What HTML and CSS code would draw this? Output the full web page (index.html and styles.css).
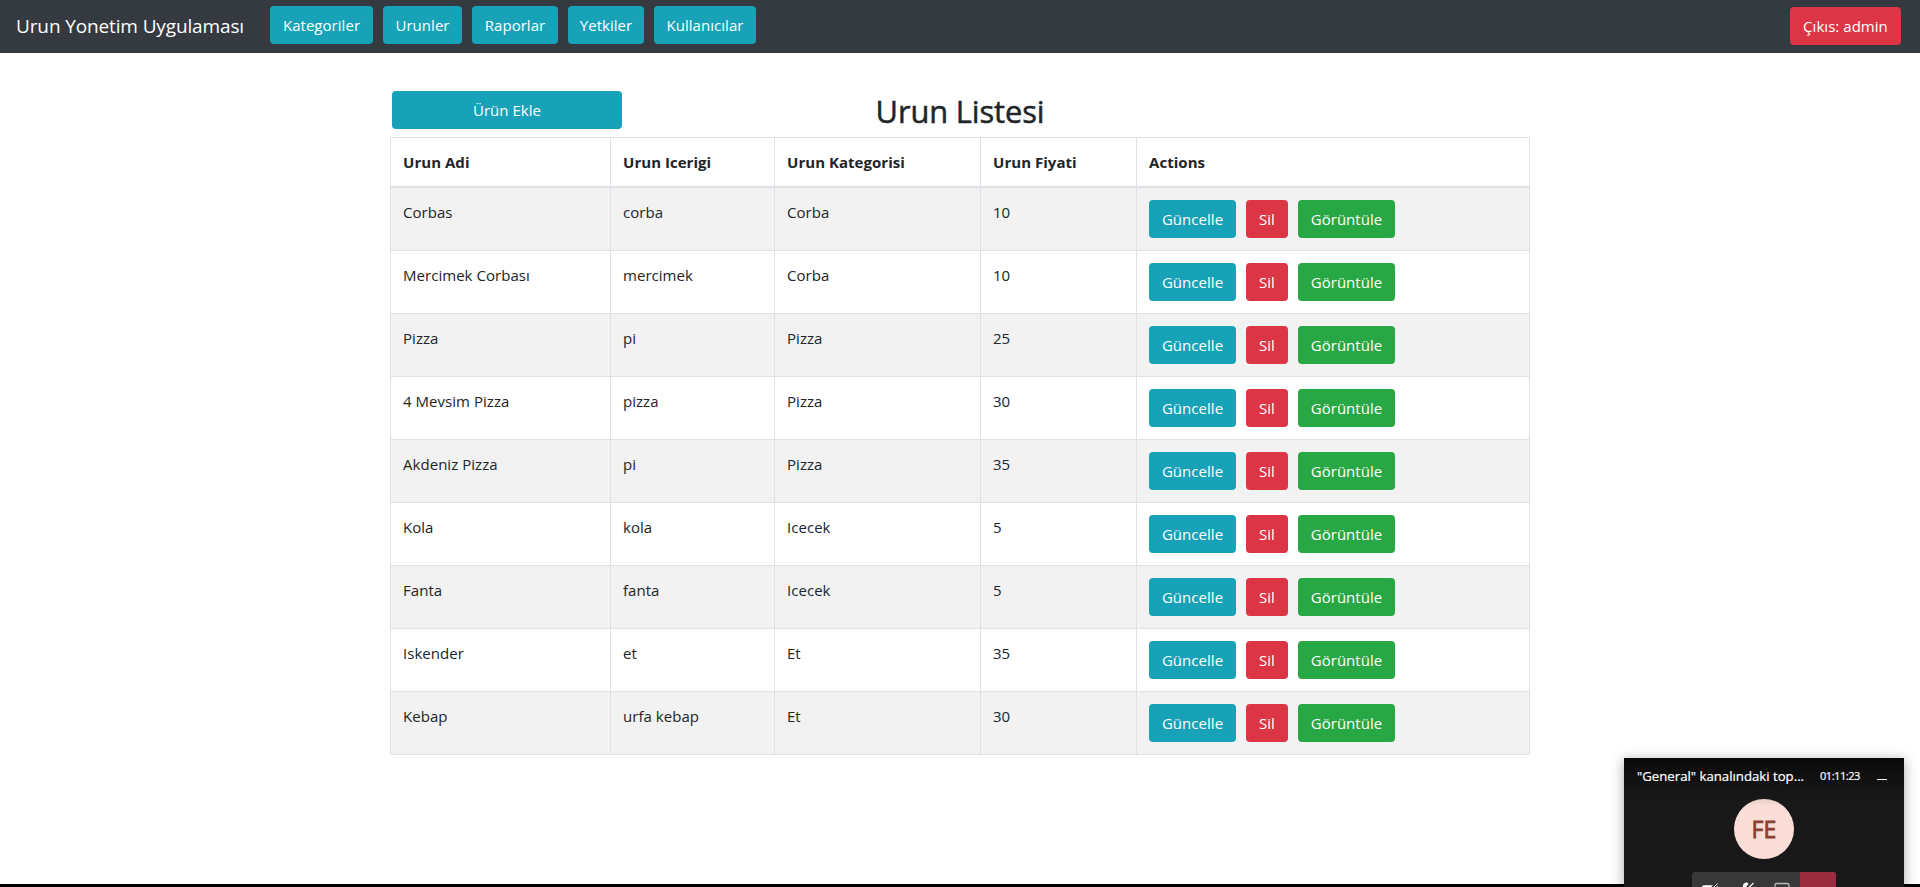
FILE: index.html
```html
<!DOCTYPE html>
<html lang="tr">
<head>
<meta charset="utf-8">
<title>Urun Listesi</title>
<link rel="stylesheet" href="styles.css">
</head>
<body>
<nav class="navbar">
  <a class="brand">Urun Yonetim Uygulaması</a>
  <div class="menu">
    <a class="btn info w-kategori">Kategoriler</a>
    <a class="btn info w-urun">Urunler</a>
    <a class="btn info w-rapor">Raporlar</a>
    <a class="btn info w-yetki">Yetkiler</a>
    <a class="btn info w-kullanici">Kullanıcılar</a>
  </div>
  <a class="btn danger logout">Çıkıs: admin</a>
</nav>
<main class="container">
  <header class="list-head">
    <a class="btn info add">Ürün Ekle</a>
    <h2>Urun Listesi</h2>
  </header>
  <table class="table">
    <colgroup><col class="c1"><col class="c2"><col class="c3"><col class="c4"><col></colgroup>
    <thead>
      <tr><th>Urun Adi</th><th>Urun Icerigi</th><th>Urun Kategorisi</th><th>Urun Fiyati</th><th>Actions</th></tr>
    </thead>
    <tbody>
      <tr><td>Corbas</td><td>corba</td><td>Corba</td><td>10</td><td><div class="actions"><a class="btn info upd">Güncelle</a><a class="btn danger del">Sil</a><a class="btn success view">Görüntüle</a></div></td></tr>
      <tr><td>Mercimek Corbası</td><td>mercimek</td><td>Corba</td><td>10</td><td><div class="actions"><a class="btn info upd">Güncelle</a><a class="btn danger del">Sil</a><a class="btn success view">Görüntüle</a></div></td></tr>
      <tr><td>Pizza</td><td>pi</td><td>Pizza</td><td>25</td><td><div class="actions"><a class="btn info upd">Güncelle</a><a class="btn danger del">Sil</a><a class="btn success view">Görüntüle</a></div></td></tr>
      <tr><td>4 Mevsim Pizza</td><td>pizza</td><td>Pizza</td><td>30</td><td><div class="actions"><a class="btn info upd">Güncelle</a><a class="btn danger del">Sil</a><a class="btn success view">Görüntüle</a></div></td></tr>
      <tr><td>Akdeniz Pizza</td><td>pi</td><td>Pizza</td><td>35</td><td><div class="actions"><a class="btn info upd">Güncelle</a><a class="btn danger del">Sil</a><a class="btn success view">Görüntüle</a></div></td></tr>
      <tr><td>Kola</td><td>kola</td><td>Icecek</td><td>5</td><td><div class="actions"><a class="btn info upd">Güncelle</a><a class="btn danger del">Sil</a><a class="btn success view">Görüntüle</a></div></td></tr>
      <tr><td>Fanta</td><td>fanta</td><td>Icecek</td><td>5</td><td><div class="actions"><a class="btn info upd">Güncelle</a><a class="btn danger del">Sil</a><a class="btn success view">Görüntüle</a></div></td></tr>
      <tr><td>Iskender</td><td>et</td><td>Et</td><td>35</td><td><div class="actions"><a class="btn info upd">Güncelle</a><a class="btn danger del">Sil</a><a class="btn success view">Görüntüle</a></div></td></tr>
      <tr><td>Kebap</td><td>urfa kebap</td><td>Et</td><td>30</td><td><div class="actions"><a class="btn info upd">Güncelle</a><a class="btn danger del">Sil</a><a class="btn success view">Görüntüle</a></div></td></tr>
    </tbody>
  </table>
</main>
<div class="bottom-edge"></div>
<aside class="call">
  <div class="call-head">
    <span class="call-title">"General" kanalındaki top...</span>
    <span class="call-time">01:11:23</span>
    <span class="call-min"></span>
  </div>
  <div class="avatar">FE</div>
  <div class="call-bar">
    <svg class="tools" width="108" height="15" viewBox="0 0 108 15">
      <path d="M12 13.2h9l-3 3h-8v-1a2 2 0 0 1 2-2z" fill="#fff"/>
      <path d="M25.500 11.500L20 17M26 14l-4 3" stroke="#ddd" stroke-width="1" fill="none"/>
      <path d="M51 15v-1.500a3 3 0 0 1 5.500-1.500L54 15z" fill="#fff"/>
      <path d="M61.500 11L57 15.500" stroke="#fff" stroke-width="1.200"/>
      <rect x="83" y="11.500" width="14" height="10" rx="1.500" fill="none" stroke="#b9b9b9" stroke-width="1.300"/>
    </svg>
    <span class="hangup"></span>
  </div>
</aside>
</body>
</html>
```
FILE: styles.css
```css
* { box-sizing: border-box; }
body {
  margin: 0;
  height: 887px;
  display: flex;
  flex-direction: column;
  overflow: hidden;
  background: #fff;
  color: #212529;
  font-family: "Open Sans", "Noto Sans", sans-serif;
  font-size: 15px;
  line-height: 24px;
  letter-spacing: 0.04px;
}
.navbar {
  display: flex;
  align-items: flex-start;
  height: 53px;
  padding: 6px 19px 0 16px;
  background: #343a40;
}
.brand {
  width: 254px;
  padding-top: 5px;
  color: #fff;
  font-size: 19px;
  line-height: 30px;
  letter-spacing: -0.13px;
  white-space: nowrap;
}
.menu { display: flex; gap: 10px; }
.btn {
  display: block;
  height: 38px;
  border-radius: 4px;
  color: #fff;
  line-height: 38px;
  text-align: center;
  white-space: nowrap;
}
.info { background: #17a2b8; }
.danger { background: #dc3545; }
.success { background: #28a745; }
.w-kategori { width: 103px; }
.w-urun { width: 79px; }
.w-rapor { width: 86px; }
.w-yetki { width: 76px; }
.w-kullanici { width: 102px; }
.logout { width: 111px; margin: 1px 0 0 auto; }
.container { width: 1140px; margin: 0 auto; flex: 1; }
.list-head {
  display: grid;
  grid-template-columns: 230px 1fr 230px;
  height: 84px;
  padding: 38px 2px 0;
}
.list-head h2 {
  margin: 0;
  font-size: 30.8px;
  font-weight: 500;
  line-height: 40px;
  text-align: center;
  letter-spacing: -0.1px;
  -webkit-text-stroke: 0.5px #212529;
}
.table {
  width: 1140px;
  table-layout: fixed;
  border-collapse: collapse;
}
.c1 { width: 220px; }
.c2 { width: 164px; }
.c3 { width: 206px; }
.c4 { width: 156px; }
.table th, .table td {
  padding: 12px;
  border: 1px solid #dee2e6;
  text-align: left;
  vertical-align: top;
}
.table th { border-bottom-width: 2px; font-weight: 700; }
.table tbody tr:nth-child(odd) { background: #f2f2f2; }
.actions { display: flex; gap: 10px; }
.upd { width: 87px; }
.del { width: 42px; }
.view { width: 97px; }
.bottom-edge { height: 3px; background: #000; }
.call {
  position: absolute;
  left: 1624px;
  top: 758px;
  width: 280px;
  height: 129px;
  overflow: visible;
  background: linear-gradient(#0a0a0a, #181818 40px);
  box-shadow: 0 2px 12px rgba(0, 0, 0, 0.35);
  display: flex;
  flex-direction: column;
  align-items: center;
}
.call-head {
  display: flex;
  align-items: center;
  width: 280px;
  height: 41px;
  padding: 0 17px 5px 13px;
  color: #fff;
  font-size: 13.2px;
  letter-spacing: 0;
}
.call-title { width: 183px; white-space: nowrap; -webkit-text-stroke: 0.2px #fff; }
.call-time { font-size: 11px; width: 57px; letter-spacing: -0.45px; -webkit-text-stroke: 0.2px #fff; }
.call-min { width: 10px; height: 1px; background: #fff; margin-top: 7px; }
.avatar {
  width: 60px;
  height: 60px;
  border-radius: 50%;
  background: linear-gradient(#e9cfc9, #fbded7 8px);
  color: #8b4032;
  font-size: 23px;
  font-weight: 500;
  line-height: 60px;
  text-align: center;
  letter-spacing: 0.2px;
  -webkit-text-stroke: 0.8px #8b4032;
}
.call-bar {
  display: flex;
  width: 144px;
  height: 15px;
  margin-top: 13px;
  border-radius: 3px 3px 0 0;
  overflow: hidden;
  background: #383838;
}
.hangup { width: 36px; background: #9b2d41; }
```
